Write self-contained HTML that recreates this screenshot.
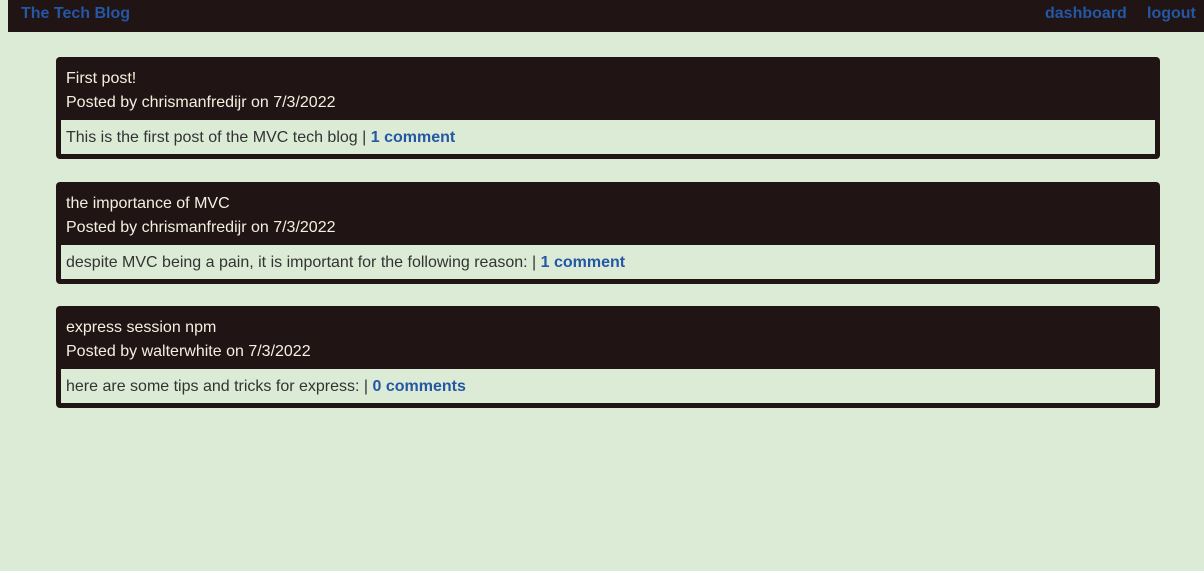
<!DOCTYPE html>
<html><head><style>
body{margin:0;background:#dcebd6;font-family:"Liberation Sans",Arial,sans-serif;font-size:16px;}
.hdr{position:absolute;left:8px;top:0;width:1196px;height:32px;background:#201414;}
.hdr a{position:absolute;top:5px;color:#2457a4;font-weight:bold;text-decoration:none;font-size:16px;line-height:17px}
.card{position:absolute;left:56px;width:1104px;height:102px;background:#201414;border-radius:4px;}
.t{position:absolute;left:10px;color:#f4f0e0;line-height:24px}
.b{position:absolute;left:5px;top:63px;width:1094px;height:34px;background:#dcebd6;color:#333;line-height:34px;}
.b span{margin-left:5px;position:relative;top:1px}
.b a{color:#2457a4;font-weight:bold;text-decoration:none}
</style></head><body>
<div class="hdr"><a style="left:13px">The Tech Blog</a><a style="left:1037px">dashboard</a><a style="left:1139px">logout</a></div>
<div class="card" style="top:57px"><div class="t" style="top:10px">First post!</div><div class="t" style="top:34px">Posted by chrismanfredijr on 7/3/2022</div><div class="b"><span>This is the first post of the MVC tech blog | <a>1 comment</a></span></div></div>
<div class="card" style="top:182px"><div class="t" style="top:10px">the importance of MVC</div><div class="t" style="top:34px">Posted by chrismanfredijr on 7/3/2022</div><div class="b"><span>despite MVC being a pain, it is important for the following reason: | <a>1 comment</a></span></div></div>
<div class="card" style="top:306px"><div class="t" style="top:10px">express session npm</div><div class="t" style="top:34px">Posted by walterwhite on 7/3/2022</div><div class="b"><span>here are some tips and tricks for express: | <a>0 comments</a></span></div></div>
</body></html>
